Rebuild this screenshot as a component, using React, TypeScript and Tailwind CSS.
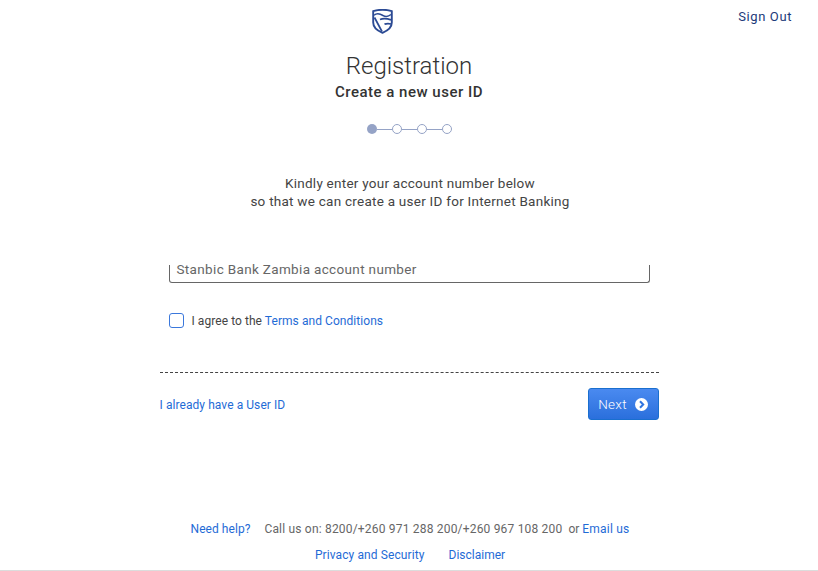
const font = { fontFamily: 'Roboto, sans-serif' };

function Shield() {
  return (
    <svg width="21" height="25" viewBox="0 0 21 25" fill="none" stroke="#2b4a94">
      <path d="M1.200 2.200C7 .4 14 .4 19.800 2.200V13.500C19.800 18.500 15.500 21.800 10.500 23.800C5.500 21.800 1.200 18.500 1.200 13.500Z" strokeWidth="1.900" />
      <path d="M2 6.200C5 3.600 8 4.600 11 6.500C14 8.200 16.500 7.600 19 5.500" strokeWidth="1.500" />
      <path d="M2.500 8.500C5 13 7.500 18 10 22.500" strokeWidth="1.700" />
      <path d="M8 10.500C11 9.200 15 9.500 19 10.800M12.500 15.200C14.500 14.500 17 14.500 19 15" strokeWidth="1.800" />
    </svg>
  );
}

function Steps() {
  return (
    <div className="flex items-center mt-[22px]">
      <span className="w-[10px] h-[10px] rounded-full bg-[#95a3c6]" />
      {[0, 1, 2].map((i) => (
        <div key={i} className="flex items-center">
          <span className="w-[15px] h-px bg-[#95a3c6]" />
          <span className="w-[10px] h-[10px] rounded-full border border-[#95a3c6] bg-white" />
        </div>
      ))}
    </div>
  );
}

export default function App() {
  return (
    <div className="relative w-[818px] h-[571px] bg-white overflow-hidden text-[#4a4a4a]" style={font}>
      <a className="absolute right-[26px] top-[9px] text-[13px] leading-[16px] tracking-[0.6px] text-[#1c3a7a]">Sign Out</a>

      <div className="h-[571px] border-b border-[#dcdcdc] flex flex-col items-center">
        <div className="mt-[9px] h-[25px] mr-[54px]"><Shield /></div>
        <h1 className="mt-[16px] text-[24px] leading-[32px] font-light text-[#333]">Registration</h1>
        <h2 className="mt-0 text-[15px] leading-[20px] font-medium tracking-[0.5px] text-[#333]">Create a new user ID</h2>
        <Steps />

        <p className="mt-[40px] ml-[2px] text-center text-[13.500px] leading-[18px] tracking-[0.25px] text-[#444]">
          Kindly enter your account number below<br />so that we can create a user ID for Internet Banking
        </p>

        <div className="w-[499px] mt-[55px] flex-1 flex flex-col">
          <div className="mx-[9px] h-[18px] border border-t-0 border-[#666] rounded-b-[3px] px-[7px] text-[13.500px] leading-[9px] tracking-[0.34px] text-[#666]">
            Stanbic Bank Zambia account number
          </div>

          <label className="mx-[9px] mt-[28px] flex items-center text-[12px] tracking-[0.06px]">
            <span className="w-[15px] h-[15px] rounded-[3px] border border-[#3b78dc] bg-white" />
            <span className="ml-[8px] pt-[2px] leading-[16px] text-[#444]">I agree to the <a className="text-[#1f6bd6]">Terms and Conditions</a></span>
          </label>

          <div className="mt-[43px] border-t border-dashed border-[#444]" />

          <div className="mt-[15px] flex items-center justify-between">
            <a className="pt-[2px] leading-[16px] text-[12px] tracking-[0.07px] text-[#1f6bd6]">I already have a User ID</a>
            <button className="w-[71px] h-[32px] rounded-[3px] border border-[#1a6fcf] bg-gradient-to-b from-[#4a8af0] to-[#2a6fdc] text-white text-[13.500px] tracking-[0.3px] font-light flex items-center justify-center gap-[8px]">
              Next
              <svg width="13" height="13" viewBox="0 0 13 13">
                <circle cx="6.500" cy="6.500" r="6.500" fill="#fff" />
                <path d="M5 3.200 8.200 6.500 5 9.800" fill="none" stroke="#2f74e0" strokeWidth="2" />
              </svg>
            </button>
          </div>
        </div>

        <div className="ml-[2px] flex items-center text-[12px] leading-[16px] text-[#666]">
          <a className="text-[#1f6bd6] tracking-[0.05px]">Need help?</a>
          <span className="ml-[14px] tracking-[0.19px]">Call us on: 8200/+260 971 288 200/+260 967 108 200</span>
          <span className="ml-[6px]">or</span>
          <a className="ml-[3px] text-[#1f6bd6] tracking-[0.2px]">Email us</a>
        </div>
        <div className="ml-[2px] mt-[10px] mb-[7px] flex gap-[24px] text-[12px] leading-[16px] tracking-[0.1px] text-[#1f6bd6]">
          <a>Privacy and Security</a>
          <a className="tracking-normal">Disclaimer</a>
        </div>
      </div>
    </div>
  );
}
